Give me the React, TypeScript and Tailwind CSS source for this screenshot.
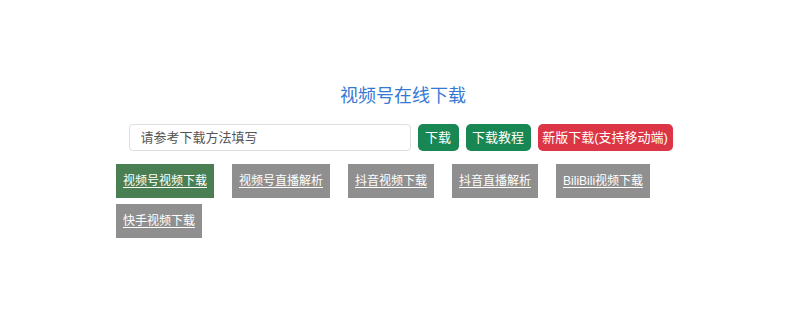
const tabs = [
  { label: '视频号视频下载', active: true },
  { label: '视频号直播解析' },
  { label: '抖音视频下载' },
  { label: '抖音直播解析' },
  { label: 'BiliBili视频下载' },
  { label: '快手视频下载' },
]

export default function App() {
  return (
    <div
      className="w-[800px] h-[331px] bg-white flex flex-col items-center"
      style={{ fontFamily: '"Liberation Sans", "Noto Sans CJK SC", sans-serif' }}
    >
      <h1 className="mt-[86px] ml-[6px] text-[18px] leading-[20px] text-[#3679d4] font-normal">
        视频号在线下载
      </h1>

      <div className="mt-[18px] ml-[1px] flex items-center gap-[7px]">
        <input
          className="w-[282px] h-[27px] px-[11px] border border-[#dcdfe3] rounded-[4px] text-[13px] text-[#555] placeholder:text-[#555] outline-none"
          placeholder="请参考下载方法填写"
        />
        <button className="h-[27px] w-[41px] rounded-[5px] bg-[#198754] text-white text-[13px]">
          下载
        </button>
        <button className="h-[27px] w-[65px] rounded-[5px] bg-[#198754] text-white text-[13px]">
          下载教程
        </button>
        <button className="h-[27px] w-[135px] rounded-[5px] bg-[#dc3545] text-white text-[13px]">
          新版下载(支持移动端)
        </button>
      </div>

      <div className="mt-[13px] w-[568px] flex flex-wrap gap-x-[18px] gap-y-[6px]">
        {tabs.map((t) => (
          <a
            key={t.label}
            href="#"
            className={
              'h-[34px] px-[7px] flex items-center text-[12px] text-white underline underline-offset-2 ' +
              (t.active ? 'bg-[#4a7f53]' : 'bg-[#8f8f8f]')
            }
          >
            {t.label}
          </a>
        ))}
      </div>
    </div>
  )
}
